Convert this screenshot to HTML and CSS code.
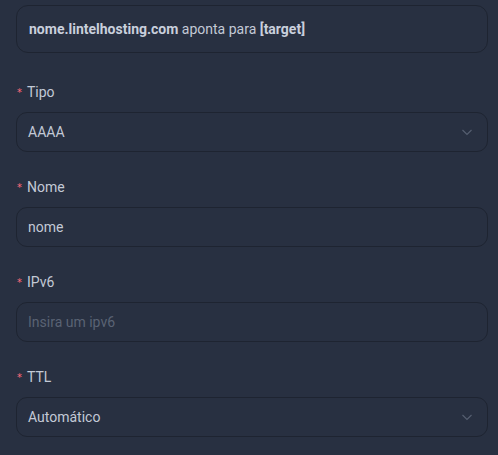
FILE: index.html
```html
<!DOCTYPE html>
<html lang="pt">
<head>
<meta charset="utf-8">
<link rel="stylesheet" href="styles.css">
</head>
<body>
<div class="form">
  <div class="notice"><p class="notice-text"><strong>nome.lintelhosting.com</strong> aponta para <strong>[target]</strong></p></div>

  <div class="field">
    <label class="label"><span class="req">*</span>Tipo</label>
    <div class="control select"><span class="value">AAAA</span>
      <svg class="chev" width="12" height="12" viewBox="0 0 12 12"><path d="M1.5 4 L6 8.5 L10.5 4" fill="none" stroke="currentColor" stroke-width="1.2"/></svg>
    </div>
  </div>

  <div class="field">
    <label class="label"><span class="req">*</span>Nome</label>
    <div class="control"><span class="value">nome</span></div>
  </div>

  <div class="field">
    <label class="label"><span class="req">*</span>IPv6</label>
    <div class="control"><span class="placeholder">Insira um ipv6</span></div>
  </div>

  <div class="field">
    <label class="label"><span class="req">*</span>TTL</label>
    <div class="control select"><span class="value">Automático</span>
      <svg class="chev" width="12" height="12" viewBox="0 0 12 12"><path d="M1.5 4 L6 8.5 L10.5 4" fill="none" stroke="currentColor" stroke-width="1.2"/></svg>
    </div>
  </div>
</div>
</body>
</html>
```
FILE: styles.css
```css
html, body {
  margin: 0;
  padding: 0;
  background: #283041;
}
body {
  font-family: Roboto, "Liberation Sans", sans-serif;
  font-size: 14px;
  color: #c3c9d6;
}
.form {
  padding: 5px 10px 0 16px;
}
.notice {
  box-sizing: border-box;
  height: 48px;
  border: 1px solid #1e2431;
  border-radius: 12px;
  padding: 0 12px;
  display: flex;
  align-items: center;
  margin-bottom: 28px;
}
.notice-text {
  margin: 0;
  line-height: 22px;
}
.notice strong {
  font-weight: 700;
  color: #c9cfdc;
}
.field {
  margin-bottom: 24px;
}
.label {
  display: flex;
  align-items: center;
  height: 23px;
  padding-bottom: 8px;
  color: #c3c9d6;
  line-height: 23px;
}
.req {
  color: #ff6b7b;
  font-size: 10px;
  margin-left: 1px;
  margin-right: 5px;
  font-family: "DejaVu Sans", sans-serif;
}
.control {
  box-sizing: border-box;
  height: 40px;
  border: 1px solid #1e2431;
  border-radius: 11px;
  padding: 0 12px 0 11px;
  display: flex;
  align-items: center;
  justify-content: space-between;
}
.value {
  color: #c3c9d6;
}
.placeholder {
  color: #5a6374;
}
.chev {
  color: #555e70;
  margin-right: 2px;
}
```
